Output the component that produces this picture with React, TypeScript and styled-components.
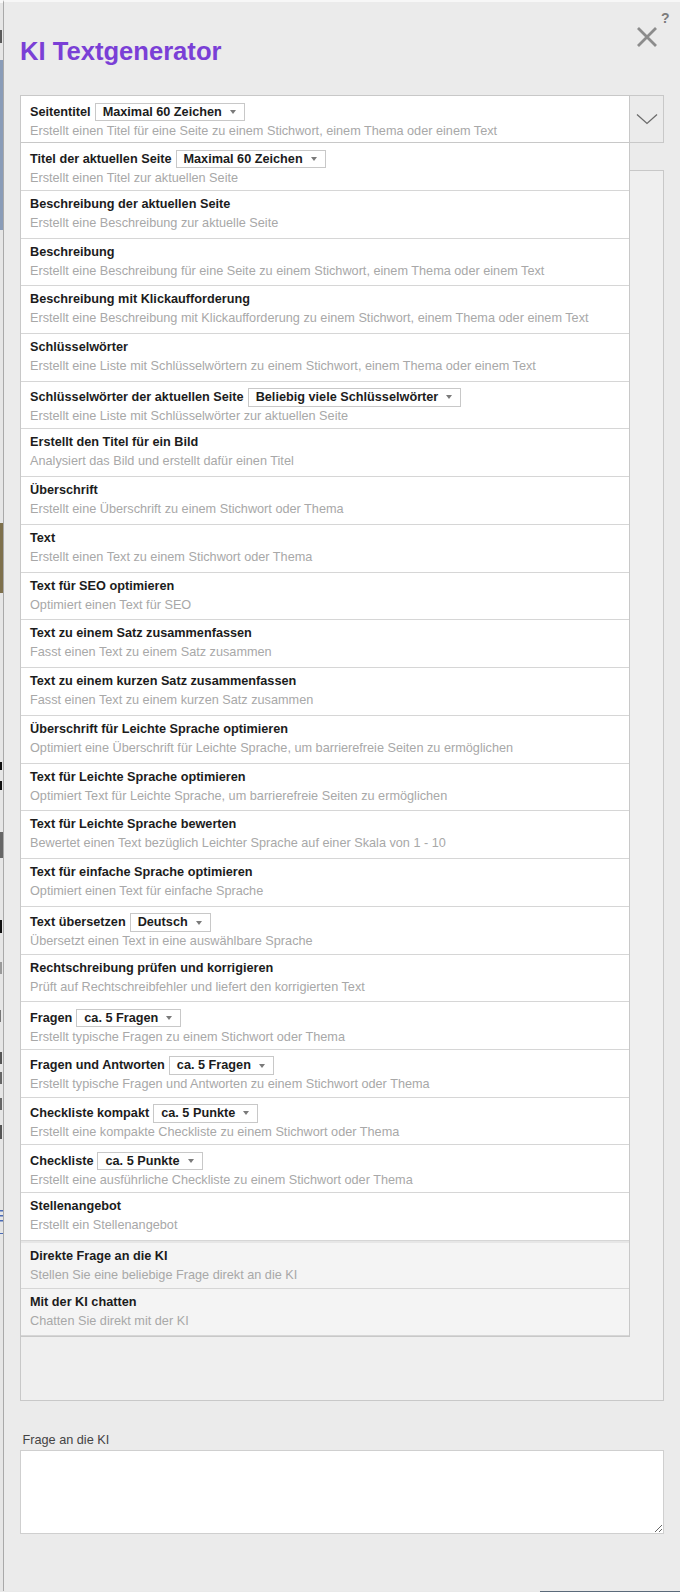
import React from "react";
import styled, { createGlobalStyle } from "styled-components";

const GlobalStyle = createGlobalStyle`
  html, body { margin: 0; padding: 0; background: #e9e9e9; }
  body { font-family: "Liberation Sans", Arial, sans-serif; }
  *, *::before, *::after { box-sizing: border-box; }
`;

type Item = { title: string; desc: string; select?: string; muted?: boolean };

const items: Item[] = [
  { title: "Seitentitel", select: "Maximal 60 Zeichen", desc: "Erstellt einen Titel für eine Seite zu einem Stichwort, einem Thema oder einem Text" },
  { title: "Titel der aktuellen Seite", select: "Maximal 60 Zeichen", desc: "Erstellt einen Titel zur aktuellen Seite" },
  { title: "Beschreibung der aktuellen Seite", desc: "Erstellt eine Beschreibung zur aktuelle Seite" },
  { title: "Beschreibung", desc: "Erstellt eine Beschreibung für eine Seite zu einem Stichwort, einem Thema oder einem Text" },
  { title: "Beschreibung mit Klickaufforderung", desc: "Erstellt eine Beschreibung mit Klickaufforderung zu einem Stichwort, einem Thema oder einem Text" },
  { title: "Schlüsselwörter", desc: "Erstellt eine Liste mit Schlüsselwörtern zu einem Stichwort, einem Thema oder einem Text" },
  { title: "Schlüsselwörter der aktuellen Seite", select: "Beliebig viele Schlüsselwörter", desc: "Erstellt eine Liste mit Schlüsselwörter zur aktuellen Seite" },
  { title: "Erstellt den Titel für ein Bild", desc: "Analysiert das Bild und erstellt dafür einen Titel" },
  { title: "Überschrift", desc: "Erstellt eine Überschrift zu einem Stichwort oder Thema" },
  { title: "Text", desc: "Erstellt einen Text zu einem Stichwort oder Thema" },
  { title: "Text für SEO optimieren", desc: "Optimiert einen Text für SEO" },
  { title: "Text zu einem Satz zusammenfassen", desc: "Fasst einen Text zu einem Satz zusammen" },
  { title: "Text zu einem kurzen Satz zusammenfassen", desc: "Fasst einen Text zu einem kurzen Satz zusammen" },
  { title: "Überschrift für Leichte Sprache optimieren", desc: "Optimiert eine Überschrift für Leichte Sprache, um barrierefreie Seiten zu ermöglichen" },
  { title: "Text für Leichte Sprache optimieren", desc: "Optimiert Text für Leichte Sprache, um barrierefreie Seiten zu ermöglichen" },
  { title: "Text für Leichte Sprache bewerten", desc: "Bewertet einen Text bezüglich Leichter Sprache auf einer Skala von 1 - 10" },
  { title: "Text für einfache Sprache optimieren", desc: "Optimiert einen Text für einfache Sprache" },
  { title: "Text übersetzen", select: "Deutsch", desc: "Übersetzt einen Text in eine auswählbare Sprache" },
  { title: "Rechtschreibung prüfen und korrigieren", desc: "Prüft auf Rechtschreibfehler und liefert den korrigierten Text" },
  { title: "Fragen", select: "ca. 5 Fragen", desc: "Erstellt typische Fragen zu einem Stichwort oder Thema" },
  { title: "Fragen und Antworten", select: "ca. 5 Fragen", desc: "Erstellt typische Fragen und Antworten zu einem Stichwort oder Thema" },
  { title: "Checkliste kompakt", select: "ca. 5 Punkte", desc: "Erstellt eine kompakte Checkliste zu einem Stichwort oder Thema" },
  { title: "Checkliste", select: "ca. 5 Punkte", desc: "Erstellt eine ausführliche Checkliste zu einem Stichwort oder Thema" },
  { title: "Stellenangebot", desc: "Erstellt ein Stellenangebot" },
  { title: "Direkte Frage an die KI", desc: "Stellen Sie eine beliebige Frage direkt an die KI", muted: true },
  { title: "Mit der KI chatten", desc: "Chatten Sie direkt mit der KI", muted: true },
];

const Page = styled.div`
  width: 680px;
  height: 1592px;
  display: flex;
  flex-direction: column;
  overflow: hidden;
`;

const Main = styled.div`
  display: flex;
  height: 1591px;
`;

const BackStrip = styled.svg`
  flex: 0 0 3px;
  width: 3px;
  height: 1591px;
  display: block;
`;

const BottomEdge = styled.div`
  height: 1px;
  display: flex;
  background: #e9e9e9;
`;

const BottomBar = styled.div`
  margin-left: 540px;
  flex: 1;
  background: #5b6a7a;
`;

const Dialog = styled.div`
  flex: 1;
  background: #ebebeb;
  border-left: 1px solid #a9a9a9;
  border-top: 2px solid #f7f7f7;
  padding: 0 16px;
  display: flex;
  flex-direction: column;
`;

const Header = styled.header`
  display: flex;
  justify-content: space-between;
  align-items: flex-start;
  height: 93.3px;
`;

const Heading = styled.h1`
  margin: 34.5px 0 0;
  font-size: 25.6px;
  line-height: 28px;
  font-weight: bold;
  color: #7a3fd6;
`;

const CloseArea = styled.div`
  display: flex;
  align-items: flex-start;
  gap: 3.3px;
  margin-top: 9px;
  margin-right: -5.6px;
`;

const CloseIcon = styled.svg`
  display: block;
  margin-top: 14.7px;
`;

const HelpMark = styled.span`
  font-size: 14px;
  line-height: 14px;
  font-weight: bold;
  color: #7c7c7c;
`;

const Combo = styled.div`
  position: relative;
  display: flex;
  height: 47.74px;
  border: 1px solid #c8c8c8;
  background: #fff;
`;

const ChevronButton = styled.div`
  flex: 0 0 34px;
  display: flex;
  align-items: center;
  justify-content: center;
  background: #ebebeb;
  border-left: 1px solid #c8c8c8;
`;

const Dropdown = styled.div`
  position: absolute;
  top: calc(100% + 1px);
  left: -1px;
  width: 610px;
  z-index: 2;
  border: 1px solid #c8c8c8;
  border-top: none;
`;

const Row = styled.div<{ $muted?: boolean; $groupStart?: boolean; $plain?: boolean }>`
  flex: 1;
  height: ${(p) => (p.$plain ? "auto" : "47.74px")};
  padding: 4px 9px 0;
  background: ${(p) => (p.$muted ? "#f4f4f4" : "#fff")};
  border-bottom: ${(p) => (p.$plain ? "none" : "1px solid #d6d6d6")};
  border-top: ${(p) => (p.$groupStart ? "2px solid #e6e6e6" : "none")};
  overflow: hidden;
`;

const TitleLine = styled.div`
  display: flex;
  align-items: flex-start;
  min-height: 19px;
  white-space: nowrap;
`;

const Title = styled.span<{ $withSelect?: boolean }>`
  font-size: 12.7px;
  line-height: 19px;
  font-weight: bold;
  color: #1c1c1c;
  padding-top: ${(p) => (p.$withSelect ? "2.5px" : "0")};
`;

const SelectBox = styled.span`
  display: inline-flex;
  align-items: center;
  gap: 8px;
  height: 18.5px;
  margin: 2.5px 0 -1px 4px;
  padding: 0 8px 0 7px;
  border: 1px solid #c8c8c8;
  background: #fff;
  font-size: 12.7px;
  font-weight: bold;
  color: #1c1c1c;
  line-height: 16.5px;
`;

const Caret = styled.span`
  width: 0;
  height: 0;
  border-left: 3.5px solid transparent;
  border-right: 3.5px solid transparent;
  border-top: 4px solid #7a7a7a;
`;

const Desc = styled.div`
  font-size: 12.7px;
  line-height: 19px;
  color: #a8a8a8;
  white-space: nowrap;
`;

const Panel = styled.div`
  margin-top: 27px;
  height: 1231px;
  border: 1px solid #c8c8c8;
  background: #efefef;
`;

const FieldLabel = styled.label`
  display: block;
  margin-top: 30px;
  padding-left: 2.5px;
  font-size: 12.7px;
  line-height: 19px;
  color: #444;
`;

const TextArea = styled.textarea`
  display: block;
  width: 100%;
  height: 84px;
  margin: 0;
  border: 1px solid #cfcfcf;
  background: #fff;
  font-family: "Liberation Sans", Arial, sans-serif;
  font-size: 12.7px;
  resize: vertical;
  outline: none;
`;

function ItemRow({ item, plain, groupStart }: { item: Item; plain?: boolean; groupStart?: boolean }) {
  return (
    <Row $muted={item.muted} $plain={plain} $groupStart={groupStart}>
      <TitleLine>
        <Title $withSelect={!!item.select}>{item.title}</Title>
        {item.select && (
          <SelectBox>
            {item.select}
            <Caret />
          </SelectBox>
        )}
      </TitleLine>
      <Desc>{item.desc}</Desc>
    </Row>
  );
}

function Strip() {
  return (
    <BackStrip viewBox="0 0 3 1591" preserveAspectRatio="none">
      <rect x="0" y="0" width="3" height="1591" fill="#e6e6e6" />
      <rect x="0" y="0" width="3" height="3" fill="#f8f8f8" />
      <rect x="0" y="30" width="2" height="13" fill="#5a5a5a" />
      <rect x="0" y="60" width="3" height="170" fill="#8a9cb8" />
      <rect x="0" y="523" width="3" height="70" fill="#7e704c" />
      <rect x="0" y="762" width="2" height="8" fill="#111" />
      <rect x="0" y="781" width="2" height="9" fill="#111" />
      <rect x="0" y="832" width="3" height="26" fill="#666" />
      <rect x="0" y="920" width="2" height="13" fill="#111" />
      <rect x="0" y="962" width="2" height="12" fill="#9a9a9a" />
      <rect x="0" y="1010" width="1" height="12" fill="#777" />
      <rect x="0" y="1052" width="2" height="12" fill="#555" />
      <rect x="0" y="1072" width="2" height="12" fill="#666" />
      <rect x="0" y="1098" width="2" height="12" fill="#666" />
      <rect x="0" y="1125" width="2" height="14" fill="#555" />
      <rect x="0" y="1210" width="3" height="1.5" fill="#4a6bb5" />
      <rect x="0" y="1215" width="3" height="1.5" fill="#4a6bb5" />
      <rect x="0" y="1220" width="3" height="1.5" fill="#4a6bb5" />
      <rect x="0" y="1233" width="3" height="1" fill="#4a6bb5" />
    </BackStrip>
  );
}

export default function App() {
  const [first, ...rest] = items;
  return (
    <>
      <GlobalStyle />
      <Page>
        <Main>
          <Strip />
          <Dialog>
            <Header>
              <Heading>KI Textgenerator</Heading>
              <CloseArea>
                <CloseIcon width="22" height="22" viewBox="0 0 22 22">
                  <path d="M2 2 L20 20 M20 2 L2 20" stroke="#8c8c8c" strokeWidth="2.8" fill="none" />
                </CloseIcon>
                <HelpMark>?</HelpMark>
              </CloseArea>
            </Header>
            <Combo>
              <ItemRow item={first} plain />
              <ChevronButton>
                <svg width="22" height="12" viewBox="0 0 22 12">
                  <polyline points="1,1.5 11,10.5 21,1.5" stroke="#6b6b6b" strokeWidth="1.3" fill="none" />
                </svg>
              </ChevronButton>
              <Dropdown>
                {rest.map((it, i) => (
                  <ItemRow
                    key={it.title}
                    item={it}
                    groupStart={it.muted && !rest[i - 1]?.muted}
                  />
                ))}
              </Dropdown>
            </Combo>
            <Panel />
            <FieldLabel htmlFor="frage">Frage an die KI</FieldLabel>
            <TextArea id="frage" />
          </Dialog>
        </Main>
        <BottomEdge>
          <BottomBar />
        </BottomEdge>
      </Page>
    </>
  );
}
